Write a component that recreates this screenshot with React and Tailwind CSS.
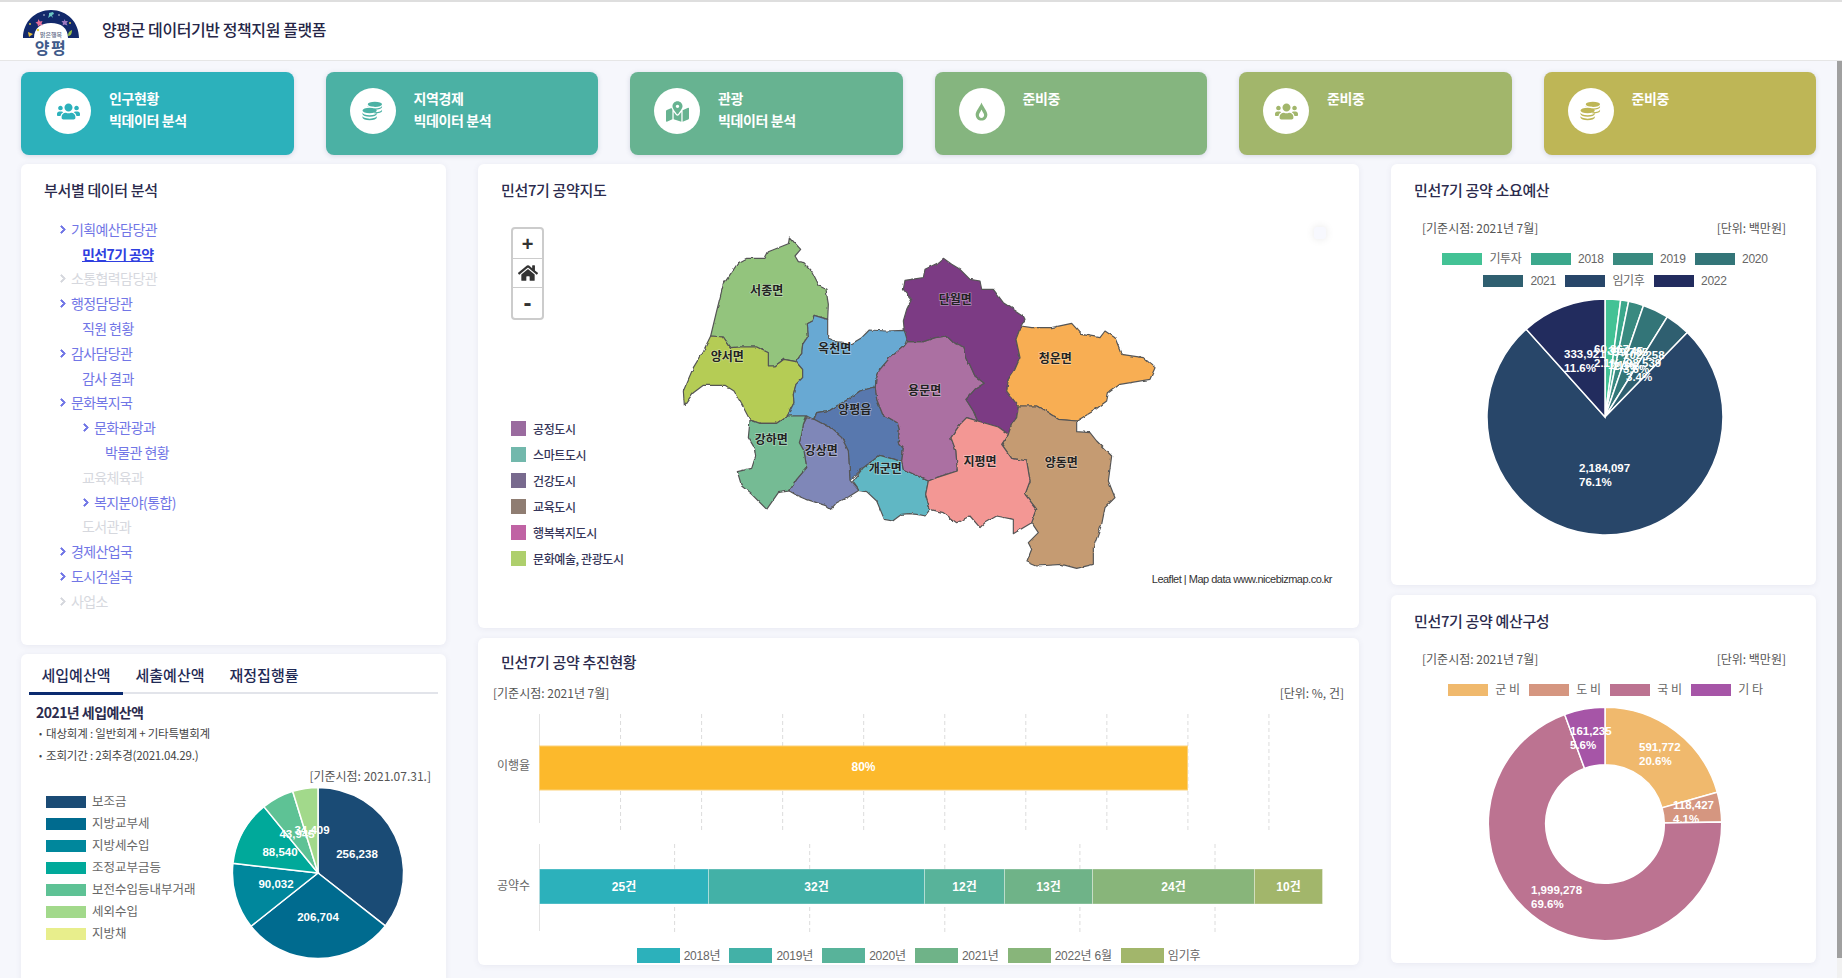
import { FaUsers, FaMapMarkedAlt, FaHome, FaChevronRight } from 'react-icons/fa';

const KR = { fontFamily: '"Noto Sans CJK KR", "Noto Sans", sans-serif' };
const CHART_FONT = '"Liberation Sans", "Noto Sans CJK KR", sans-serif';

const topCards = [
  { color: 'bg-[#2cb1bb]', text: 'text-[#2cb1bb]', icon: 'users', lines: ['인구현황', '빅데이터 분석'] },
  { color: 'bg-[#4bb1a4]', text: 'text-[#4bb1a4]', icon: 'coins', lines: ['지역경제', '빅데이터 분석'] },
  { color: 'bg-[#67b391]', text: 'text-[#67b391]', icon: 'map', lines: ['관광', '빅데이터 분석'] },
  { color: 'bg-[#85b57f]', text: 'text-[#85b57f]', icon: 'drop', lines: ['준비중'] },
  { color: 'bg-[#a2b66b]', text: 'text-[#a2b66b]', icon: 'users', lines: ['준비중'] },
  { color: 'bg-[#beb656]', text: 'text-[#beb656]', icon: 'coins', lines: ['준비중'] },
];

const tree = [
  { label: '기획예산담당관', level: 0, arrow: true },
  { label: '민선7기 공약', level: 1, active: true },
  { label: '소통협력담당관', level: 0, arrow: true, off: true },
  { label: '행정담당관', level: 0, arrow: true },
  { label: '직원 현황', level: 1 },
  { label: '감사담당관', level: 0, arrow: true },
  { label: '감사 결과', level: 1 },
  { label: '문화복지국', level: 0, arrow: true },
  { label: '문화관광과', level: 1, arrow: true },
  { label: '박물관 현황', level: 2 },
  { label: '교육체육과', level: 1, off: true },
  { label: '복지분야(통합)', level: 1, arrow: true },
  { label: '도서관과', level: 1, off: true },
  { label: '경제산업국', level: 0, arrow: true },
  { label: '도시건설국', level: 0, arrow: true },
  { label: '사업소', level: 0, arrow: true, off: true },
];

const regions = [
  { name: '서종면', fill: '#93c47d', x: 320, y: 210, pts: '388,48 422,85 405,105 415,122 432,125 455,150 478,195 498,205 505,250 503,295 462,283 458,300 442,308 445,345 428,370 425,398 408,422 372,415 345,435 325,435 325,395 290,378 240,378 212,380 190,348 152,345 170,270 190,190 235,125 260,112 315,112 325,92 385,68' },
  { name: '양서면', fill: '#b5cc55', x: 202, y: 408, pts: '152,345 190,348 212,380 240,378 290,378 325,395 325,435 345,435 372,415 408,422 428,445 428,470 408,490 400,520 402,545 382,585 350,607 300,607 270,597 245,550 222,510 195,493 130,493 100,515 73,553 70,510 100,440 130,390' },
  { name: '옥천면', fill: '#67a9d3', x: 524, y: 383, pts: '462,283 503,295 503,350 530,362 575,368 605,350 628,327 680,330 733,328 743,350 733,375 690,410 660,445 648,475 646,498 600,510 565,535 535,552 510,568 470,575 460,595 440,585 382,585 402,545 400,520 408,490 428,470 428,445 408,422 425,398 428,370 445,345 442,308 458,300' },
  { name: '양평읍', fill: '#5878ae', x: 584, y: 566, pts: '646,498 650,535 668,580 712,605 718,625 715,665 730,682 725,722 660,703 610,740 570,778 565,690 545,650 510,620 462,595 470,575 510,568 535,552 565,535 600,510' },
  { name: '강상면', fill: '#7f87b8', x: 484, y: 690, pts: '440,590 462,595 510,620 545,650 565,690 570,778 597,808 565,828 530,845 512,865 495,853 440,835 405,820 388,810 410,775 440,740 432,690 418,665 425,640 430,610' },
  { name: '강하면', fill: '#74bb94', x: 334, y: 658, pts: '270,597 300,607 350,607 382,585 440,585 430,610 425,640 418,665 432,690 440,740 410,775 388,810 355,815 320,865 275,820 245,795 232,752 275,742 287,705 283,680 265,650' },
  { name: '개군면', fill: '#60b7c4', x: 676, y: 745, pts: '660,703 725,722 730,745 805,780 797,820 810,865 795,885 770,880 745,878 725,880 698,900 673,895 650,840 620,812 597,808 578,782 610,740' },
  { name: '용문면', fill: '#ab6fa2', x: 794, y: 510, pts: '743,362 790,362 825,350 860,345 880,365 912,378 920,410 945,465 973,487 945,505 918,535 940,570 953,600 920,590 900,610 873,650 888,690 892,750 860,760 830,770 805,780 730,745 725,722 730,682 715,665 718,625 712,605 668,580 650,535 646,498 648,475 660,445 690,410 733,375' },
  { name: '단월면', fill: '#7b3b84', x: 886, y: 237, pts: '850,112 875,130 900,145 930,175 960,180 965,205 1000,205 1030,245 1090,285 1095,295 1083,315 1068,355 1080,410 1065,445 1045,475 1040,510 1075,555 1070,590 1055,610 1045,640 1015,618 953,600 940,570 918,535 945,505 973,487 945,465 920,410 912,378 880,365 860,345 825,350 790,362 743,362 733,328 730,300 740,265 755,235 730,205 735,178 790,170 795,145 835,125' },
  { name: '청운면', fill: '#f8ae53', x: 1186, y: 414, pts: '1083,315 1115,320 1175,320 1235,307 1265,340 1320,350 1335,330 1365,350 1385,400 1450,410 1485,440 1470,475 1380,490 1345,515 1340,540 1300,570 1250,600 1195,595 1165,575 1130,555 1075,555 1040,510 1045,475 1065,445 1080,410 1068,355' },
  { name: '양동면', fill: '#c59b72', x: 1204, y: 727, pts: '1130,555 1165,575 1195,595 1250,600 1250,632 1290,635 1310,660 1355,705 1345,780 1365,830 1335,860 1325,910 1300,980 1300,1030 1250,1042 1205,1030 1130,1035 1100,1022 1115,985 1105,965 1135,935 1115,905 1130,865 1095,820 1110,780 1100,720 1055,712 1025,670 1045,640 1055,610 1070,590 1075,555' },
  { name: '지평면', fill: '#f39794', x: 960, y: 723, pts: '920,590 953,600 1015,618 1045,640 1025,670 1055,712 1100,720 1110,780 1095,820 1130,865 1115,905 1060,938 1060,895 1010,885 975,905 960,920 930,885 890,905 850,875 810,865 797,820 805,780 830,770 860,760 892,750 888,690 873,650 900,610' },
];

const mapLegend = [
  ['공정도시', 'bg-[#9a6b9f]'],
  ['스마트도시', 'bg-[#72b8ac]'],
  ['건강도시', 'bg-[#786a8e]'],
  ['교육도시', 'bg-[#8f7d72]'],
  ['행복복지도시', 'bg-[#c063a4]'],
  ['문화예술, 관광도시', 'bg-[#aecf6c]'],
];

const revenue = [
  { label: '보조금', value: 256238, color: '#1a4b75', swatch: 'bg-[#1a4b75]', text: '256,238', x: 357, y: 856 },
  { label: '지방교부세', value: 206704, color: '#006b8f', swatch: 'bg-[#006b8f]', text: '206,704', x: 318, y: 919 },
  { label: '지방세수입', value: 90032, color: '#00879c', swatch: 'bg-[#00879c]', text: '90,032', x: 276, y: 886 },
  { label: '조정교부금등', value: 88540, color: '#00a99a', swatch: 'bg-[#00a99a]', text: '88,540', x: 280, y: 854 },
  { label: '보전수입등내부거래', value: 43945, color: '#5ec295', swatch: 'bg-[#5ec295]', text: '43,945', x: 297, y: 836 },
  { label: '세외수입', value: 34409, color: '#a2d98b', swatch: 'bg-[#a2d98b]', text: '34,409', x: 312, y: 832 },
  { label: '지방채', value: 0, color: '#e8ee8c', swatch: 'bg-[#e8ee8c]' },
];

const budget = [
  { label: '기투자', value: 60867, color: '#43c295', swatch: 'bg-[#43c295]', text: ['60,867', '2.1%'], x: 1593, y: 348 },
  { label: '2018', value: 31245, color: '#3ba88c', swatch: 'bg-[#3ba88c]', text: ['31,245', '1.1%'], x: 1607, y: 350 },
  { label: '2019', value: 59785, color: '#398a80', swatch: 'bg-[#398a80]', text: ['59,785', '2.1%'], x: 1612, y: 351 },
  { label: '2020', value: 102258, color: '#337578', swatch: 'bg-[#337578]', text: ['102,258', '3.6%'], x: 1622, y: 354 },
  { label: '2021', value: 98539, color: '#2f5f70', swatch: 'bg-[#2f5f70]', text: ['98,539', '3.4%'], x: 1625, y: 362 },
  { label: '임기후', value: 2184097, color: '#284669', swatch: 'bg-[#284669]', text: ['2,184,097', '76.1%'], x: 1578, y: 467 },
  { label: '2022', value: 333921, color: '#222c5e', swatch: 'bg-[#222c5e]', text: ['333,921', '11.6%'], x: 1563, y: 353 },
];

const composition = [
  { label: '군 비', value: 591772, color: '#f0b96d', swatch: 'bg-[#f0b96d]', text: ['591,772', '20.6%'], x: 1638, y: 746 },
  { label: '도 비', value: 118427, color: '#d59680', swatch: 'bg-[#d59680]', text: ['118,427', '4.1%'], x: 1672, y: 804 },
  { label: '국 비', value: 1999278, color: '#bc7391', swatch: 'bg-[#bc7391]', text: ['1,999,278', '69.6%'], x: 1530, y: 889 },
  { label: '기 타', value: 161235, color: '#a655a7', swatch: 'bg-[#a655a7]', text: ['161,235', '5.6%'], x: 1569, y: 730 },
];

const barLegend = [
  ['2018년', 'bg-[#2cb1bb]'],
  ['2019년', 'bg-[#43b1a7]'],
  ['2020년', 'bg-[#58b39a]'],
  ['2021년', 'bg-[#6fb388]'],
  ['2022년 6월', 'bg-[#88b57a]'],
  ['임기후', 'bg-[#a2b66b]'],
];

const pledgeBar = [
  { w: 169, color: '#2cb1bb', label: '25건' },
  { w: 216, color: '#43b1a7', label: '32건' },
  { w: 80, color: '#58b39a', label: '12건' },
  { w: 88, color: '#6fb388', label: '13건' },
  { w: 162, color: '#88b57a', label: '24건' },
  { w: 68, color: '#a2b66b', label: '10건' },
];

// builds wedge paths for a pie or donut, clockwise from 12 o'clock
function slices(items, cx, cy, r, inner = 0) {
  const total = items.reduce((s, i) => s + i.value, 0);
  let a = -Math.PI / 2;
  return items.filter((i) => i.value > 0).map((item) => {
    const b = a + (item.value / total) * Math.PI * 2;
    const large = b - a > Math.PI ? 1 : 0;
    const p = (rad, ang) => `${(cx + rad * Math.cos(ang)).toFixed(2)} ${(cy + rad * Math.sin(ang)).toFixed(2)}`;
    const d = inner
      ? `M${p(r, a)} A${r} ${r} 0 ${large} 1 ${p(r, b)} L${p(inner, b)} A${inner} ${inner} 0 ${large} 0 ${p(inner, a)} Z`
      : `M${cx} ${cy} L${p(r, a)} A${r} ${r} 0 ${large} 1 ${p(r, b)} Z`;
    a = b;
    return { d, color: item.color };
  });
}

function Panel({ className = '', children }) {
  return (
    <div className={`bg-white rounded-md shadow-[0_1px_6px_rgba(60,70,110,0.08)] overflow-hidden ${className}`}>
      {children}
    </div>
  );
}

function PanelTitle({ children }) {
  return (
    <div className="h-[52px] pl-[23px] flex items-center text-[15px] font-medium tracking-[-0.35px] text-[#2b2b4d]">
      {children}
    </div>
  );
}

function DropIcon() {
  return (
    <svg viewBox="0 0 20 28" className="w-[13px] h-[19px]">
      <path fill="currentColor" d="M10 0C8 6 1 13 1 18.5 1 24 5 28 10 28s9-4 9-9.5C19 13 12 6 10 0Z" />
      <path fill="#fff" d="M10 11c-1 3-4 6-4 8.500 0 2.500 1.800 4.500 4 4.500s4-2 4-4.500C14 17 11 14 10 11Z" />
    </svg>
  );
}

// two stacks of coins, the small one behind on the upper right
function CoinsIcon() {
  const band = (cx, y, rx, ry, h) => `M${cx - rx} ${y}A${rx} ${ry} 0 0 0 ${cx + rx} ${y}V${y + h}A${rx} ${ry} 0 0 1 ${cx - rx} ${y + h}Z`;
  return (
    <svg viewBox="0 0 22 22" className="w-[21px] h-[21px]" fill="currentColor">
      <ellipse cx="13.500" cy="3.500" rx="7.500" ry="2.800" />
      <path d={band(13.5, 5, 7.5, 2.8, 1.4)} />
      <path d={band(13.5, 9, 7.500, 2.800, 1.4)} />
      <rect x="0" y="6" width="13" height="16" fill="#fff" />
      <ellipse cx="8" cy="10" rx="7.500" ry="2.900" />
      <path d={band(8, 12, 7.5, 2.9, 1.6)} />
      <path d={band(8, 15.6, 7.5, 2.9, 1.6)} />
    </svg>
  );
}

function CardIcon({ type, text }) {
  return (
    <div className={`w-[46px] h-[46px] rounded-full bg-white flex items-center justify-center shrink-0 ${text}`}>
      {type === 'users' && <FaUsers className="text-[23px]" />}
      {type === 'coins' && <CoinsIcon />}
      {type === 'map' && <FaMapMarkedAlt className="text-[23px]" />}
      {type === 'drop' && <DropIcon />}
    </div>
  );
}

function Logo() {
  return (
    <div className="w-[56px] ml-[23px] flex flex-col items-center relative h-[48px] mt-[1px]">
      <svg viewBox="0 0 56 28" className="w-[56px] h-[28px] absolute top-0 left-0">
        <path fill="#12296b" d="M0 28C0 12 12 0 28 0s28 12 28 28H45C45 18 38 13 28 13S11 18 11 28Z" />
        <circle cx="15" cy="20" r="1.2" fill="#e8d23c" />
        <path fill="#e26d9a" d="M15 9l2 2.500 2.500-.5-1 2.500 1 2-2.500-.5-2 1.500-.5-2.500-2-1.500 2.500-1Z" />
        <path fill="#6cc7c4" d="M26 3l4-1 1 2-2 1 1 3-2-2-3 2 1-3Z" />
        <path fill="#9a78c0" d="M41 9l1.500 2 2.500 0-1.500 2 1 2.500-3-1-2 1 .5-2.500-1.500-2 2.500 0Z" />
        <path fill="#9bc24a" d="M49 20c-3 1-4 3-4 6 3 0 4-3 4-6Z" />
        <path fill="#eac23c" d="M5 22l5 2-4 3Z" />
        <circle cx="7" cy="14" r="0.9" fill="#e8d23c" />
        <circle cx="36" cy="5" r="0.7" fill="#fff" />
        <circle cx="47" cy="13" r="0.9" fill="#e8d23c" />
        <circle cx="21" cy="5" r="0.7" fill="#fff" />
      </svg>
      <span className="mt-[21px] text-[6px] leading-[8px] text-[#5d6a86] font-medium whitespace-nowrap">맑은행복</span>
      <span className="text-[16px] leading-[17px] font-bold tracking-[1.5px] text-[#3f5a8a] whitespace-nowrap">양평</span>
    </div>
  );
}

function TreeRow({ item }) {
  const pad = ['pl-[38px]', 'pl-[61px]', 'pl-[84px]'][item.level];
  const color = item.off ? 'text-[#d6d8de]' : item.active ? 'text-[#2f3fe0]' : 'text-[#7176e6]';
  const indent = item.arrow ? '' : item.level === 0 ? 'pl-[12px]' : '';
  return (
    <div className={`h-[24.8px] flex items-center ${pad} ${indent} ${color}`}>
      {item.arrow && <FaChevronRight className="text-[9px] w-[8px] mr-[4px] shrink-0 stroke-current stroke-[50]" />}
      <span className={`text-[14px] tracking-[-0.6px] ${item.active ? 'font-bold underline' : ''}`}>{item.label}</span>
    </div>
  );
}

function ChartLegend({ items, className = '' }) {
  return (
    <div className={`flex flex-wrap justify-center gap-x-[9.5px] gap-y-[10px] ${className}`}>
      {items.map((i) => (
        <div key={i.label} className="flex items-center h-[12px]">
          <span className={`w-[40px] h-[12px] mr-[7px] ${i.swatch}`} />
          <span className="text-[12px] text-[#666] tracking-[-0.3px]" style={{ fontFamily: CHART_FONT }}>{i.label}</span>
        </div>
      ))}
    </div>
  );
}

function BasisRow({ left, right, className = '' }) {
  return (
    <div className={`flex justify-between text-[12px] text-[#555] ${className}`}>
      <span>{left}</span>
      <span>{right}</span>
    </div>
  );
}

function TwoLineLabel({ item, ox, oy }) {
  return (
    <text fill="#fff" fontSize="11.5" fontWeight="700" fontFamily={CHART_FONT}>
      <tspan x={item.x - ox} y={item.y - oy + 5}>{item.text[0]}</tspan>
      <tspan x={item.x - ox} y={item.y - oy + 19}>{item.text[1]}</tspan>
    </text>
  );
}

function MapPanel() {
  return (
    <Panel className="h-[464px]">
      <PanelTitle>민선7기 공약지도</PanelTitle>
      <div className="relative h-[412px]">
        <div className="absolute left-[33px] top-[11px] w-[33px] border-2 border-[#ccc] rounded bg-white text-[#333]">
          <div className="h-[30px] flex items-center justify-center text-[20px] font-bold leading-none border-b border-[#ccc]" style={{ fontFamily: '"Liberation Sans", sans-serif' }}>+</div>
          <div className="h-[29px] flex items-center justify-center border-b border-[#ccc]">
            <FaHome className="text-[20px]" />
          </div>
          <div className="h-[30px] flex items-center justify-center text-[24px] font-bold leading-none" style={{ fontFamily: '"Liberation Sans", sans-serif' }}>-</div>
        </div>

        <div className="absolute left-[33px] top-[205px] flex flex-col gap-[11px]">
          {mapLegend.map(([label, swatch]) => (
            <div key={label} className="flex items-center h-[15px]">
              <span className={`w-[15px] h-[15px] mr-[7px] ${swatch}`} />
              <span className="text-[12px] font-medium tracking-[-0.4px] text-[#36365a]">{label}</span>
            </div>
          ))}
        </div>

        <svg viewBox="0 0 1560 1110" className="absolute left-[182px] top-[5px] w-[520px] h-[370px]">
          <defs>
            {/* roughens the borders; same map for all, so shared edges stay shared */}
            <filter id="rough" filterUnits="userSpaceOnUse" x="0" y="0" width="1560" height="1110">
              <feTurbulence type="fractalNoise" baseFrequency="0.045" numOctaves="2" seed="4" />
              <feDisplacementMap in="SourceGraphic" scale="9" xChannelSelector="R" yChannelSelector="G" />
            </filter>
          </defs>
          <g filter="url(#rough)">
            {regions.map((r) => (
              <polygon key={r.name} points={r.pts} fill={r.fill} stroke="#555" strokeWidth="3.500" strokeLinejoin="round" />
            ))}
          </g>
          {regions.map((r) => (
            <text
              key={r.name}
              x={r.x}
              y={r.y + 12}
              textAnchor="middle"
              fontSize="36"
              fontWeight="700"
              fill="#222"
              stroke="#ffffff66"
              strokeWidth="4"
              paintOrder="stroke"
              fontFamily='"Noto Sans CJK KR", sans-serif'
            >
              {r.name}
            </text>
          ))}
        </svg>

        <div className="absolute right-[27px] top-[355px] text-[11px] tracking-[-0.5px] text-[#333]" style={{ fontFamily: '"Liberation Sans", "Noto Sans CJK KR", sans-serif' }}>
          Leaflet | Map data www.nicebizmap.co.kr
        </div>
        <div className="absolute left-[836px] top-[11px] w-[12px] h-[12px] rounded-[3px] bg-[#f7f8fe] shadow-[0_0_8px_rgba(0,0,0,0.1)]" />
      </div>
    </Panel>
  );
}

function BarChartPanel() {
  const x0 = 45;
  const top = [1, 2, 3, 4, 5, 6, 7, 8, 9].map((n) => x0 + n * 81.05);
  const bottom = [1, 2, 3, 4, 5].map((n) => x0 + n * 135.1);
  let cursor = x0;
  return (
    <Panel className="h-[327px] relative">
      <div className="h-[48px] pl-[23px] flex items-center text-[15px] font-medium tracking-[-0.35px] text-[#2b2b4d]">민선7기 공약 추진현황</div>
      <BasisRow left="[기준시점: 2021년 7월]" right="[단위: %, 건]" className="pl-[15px] pr-[15px] h-[14px] items-center" />
      <svg viewBox="0 0 881 234" className="w-[881px] h-[234px] block -mt-[2px]" fontFamily={CHART_FONT}>
        {/* y here = page y - 698 */}
        <line x1={x0 + 16.5} x2={x0 + 16.5} y1="16" y2="125" stroke="#e3e3e3" />
        {top.map((x) => (
          <line key={x} x1={x + 16.5} x2={x + 16.5} y1="16" y2="134" stroke="#dcdcdc" strokeDasharray="4 3" />
        ))}
        <rect x={x0 + 16.5} y="48" width="648" height="44" fill="#fcb92c" stroke="#fbd27a" />
        <text x={x0 + 16.5 + 324} y="73" textAnchor="middle" fill="#fff" fontSize="12" fontWeight="700">80%</text>
        <text x="52" y="72" textAnchor="end" fill="#666" fontSize="12">이행율</text>

        <line x1={x0 + 16.5} x2={x0 + 16.5} y1="146" y2="233" stroke="#e3e3e3" />
        {bottom.map((x) => (
          <line key={x} x1={x + 16.5} x2={x + 16.5} y1="146" y2="234" stroke="#dcdcdc" strokeDasharray="4 3" />
        ))}
        {pledgeBar.map((s) => {
          const x = cursor + 16.5;
          cursor += s.w;
          return (
            <g key={s.label}>
              <rect x={x} y="171" width={s.w} height="35" fill={s.color} stroke="#ffffff55" />
              <text x={x + s.w / 2} y="193" textAnchor="middle" fill="#fff" fontSize="12" fontWeight="700">{s.label}</text>
            </g>
          );
        })}
        <text x="52" y="192" textAnchor="end" fill="#666" fontSize="12">공약수</text>
      </svg>
      <div className="flex justify-center gap-x-[9px] mt-[16px]">
        {barLegend.map(([label, swatch]) => (
          <div key={label} className="flex items-center h-[15px]">
            <span className={`w-[43px] h-[15px] mr-[4px] ${swatch}`} />
            <span className="text-[12px] text-[#666] tracking-[-0.2px]" style={{ fontFamily: CHART_FONT }}>{label}</span>
          </div>
        ))}
      </div>
    </Panel>
  );
}

export default function App() {
  return (
    <div className="h-screen w-full overflow-hidden flex flex-col bg-[#f6f7fc] text-[#333]" style={KR}>
      <header className="h-[61px] shrink-0 bg-white border-t-2 border-b border-t-[#dedede] border-b-[#e6e6e6] flex items-start">
        <div className="pt-[7px]"><Logo /></div>
        <div className="ml-[23px] h-[56px] flex items-center text-[16px] font-medium tracking-[-0.42px] text-[#262647] pb-[2px]">
          양평군 데이터기반 정책지원 플랫폼
        </div>
      </header>

      <div className="flex-1 min-h-0 flex">
        <main className="flex-1 min-w-0 overflow-hidden pl-[21px] pr-[21px] pt-[11px]">
          <div className="flex gap-8 h-[83px]">
            {topCards.map((c, idx) => (
              <div key={idx} className={`flex-1 rounded-lg shadow-[0_1px_5px_rgba(60,70,110,0.18)] pl-[24px] pt-[16px] flex gap-[18px] ${c.color}`}>
                <CardIcon type={c.icon} text={c.text} />
                <div className="text-[14px] font-semibold text-white leading-[22px] tracking-[-0.4px] -mt-[1px]">
                  {c.lines.map((l) => <div key={l}>{l}</div>)}
                </div>
              </div>
            ))}
          </div>

          <div className="flex gap-8 mt-[9px] items-start">
            <div className="w-[425px] shrink-0 flex flex-col gap-[9px]">
              <Panel className="h-[481px]">
                <PanelTitle>부서별 데이터 분석</PanelTitle>
                <div className="pt-[1px]">
                  {tree.map((item) => <TreeRow key={item.label} item={item} />)}
                </div>
              </Panel>

              <Panel className="h-[330px] relative">
                <div className="mx-[8px] mt-[2px] flex border-b-2 border-[#e2e4ea] h-[38px]">
                  <div className="w-[94px] border-b-[3px] border-[#0b2a6f] h-[39px] text-center text-[15px] font-medium text-[#1f2a55] pt-[8px]">세입예산액</div>
                  <div className="w-[94px] text-center text-[15px] font-medium text-[#1f2a55] pt-[8px]">세출예산액</div>
                  <div className="w-[94px] text-center text-[15px] font-medium text-[#1f2a55] pt-[8px]">재정집행률</div>
                </div>
                <div className="pl-[15px] mt-[8px] text-[14px] font-semibold tracking-[-0.55px] text-[#2b2b4d] leading-[20px]">2021년 세입예산액</div>
                <ul className="pl-[18px] mt-[1px] text-[11.5px] tracking-[-0.2px] text-[#444]">
                  <li className="h-[22px] flex items-center"><span className="w-[7px] text-[9px]">•</span>대상회계 : 일반회계 + 기타특별회계</li>
                  <li className="h-[22px] flex items-center"><span className="w-[7px] text-[9px]">•</span>조회기간 : 2회추경(2021.04.29.)</li>
                </ul>
                <div className="pr-[15px] text-right text-[12px] leading-[14px] text-[#555] mt-[2px]">[기준시점: 2021.07.31.]</div>
                <div className="flex">
                  <div className="pl-[25px] pt-[13px] w-[240px] flex flex-col gap-[10px] shrink-0">
                    {revenue.map((r) => (
                      <div key={r.label} className="flex items-center h-[12px]">
                        <span className={`w-[40px] h-[12px] mr-[6px] ${r.swatch}`} />
                        <span className="text-[12.5px] text-[#666] -mt-[2px]">{r.label}</span>
                      </div>
                    ))}
                  </div>
                  <svg viewBox="0 0 180 180" className="w-[180px] h-[180px] -ml-[33px] shrink-0" fontFamily={CHART_FONT}>
                    {slices(revenue, 90, 90, 85.6).map((s, i) => (
                      <path key={i} d={s.d} fill={s.color} stroke="#fff" strokeWidth="1.500" />
                    ))}
                    {revenue.filter((r) => r.text).map((r) => (
                      <text key={r.text} x={r.x - 228} y={r.y - 785 + 4} textAnchor="middle" fill="#fff" fontSize="11.5" fontWeight="700">{r.text}</text>
                    ))}
                  </svg>
                </div>
              </Panel>
            </div>

            <div className="flex-1 min-w-0 flex flex-col gap-[10px]">
              <MapPanel />
              <BarChartPanel />
            </div>

            <div className="w-[425px] shrink-0 flex flex-col gap-[10px]">
              <Panel className="h-[421px]">
                <PanelTitle>민선7기 공약 소요예산</PanelTitle>
                <BasisRow left="[기준시점: 2021년 7월]" right="[단위: 백만원]" className="pl-[31px] pr-[30px] h-[20px] items-center mt-[2px]" />
                <ChartLegend items={budget} className="mt-[15px] pl-[42px] pr-[39px]" />
                <svg viewBox="0 0 240 240" className="w-[240px] h-[240px] mx-auto mt-[10px] translate-x-[1px]">
                  {slices(budget, 120, 120, 118).map((s, i) => (
                    <path key={i} d={s.d} fill={s.color} stroke="#fff" strokeWidth="1.500" />
                  ))}
                  {budget.map((b) => <TwoLineLabel key={b.label} item={b} ox={1484} oy={297} />)}
                </svg>
              </Panel>

              <Panel className="h-[368px]">
                <PanelTitle>민선7기 공약 예산구성</PanelTitle>
                <BasisRow left="[기준시점: 2021년 7월]" right="[단위: 백만원]" className="pl-[31px] pr-[30px] h-[20px] items-center mt-[2px]" />
                <ChartLegend items={composition} className="mt-[15px] pl-[24px] pr-[20px]" />
                <svg viewBox="0 0 240 240" className="w-[240px] h-[240px] mx-auto mt-[8px] translate-x-[1px]">
                  {slices(composition, 120, 120, 116.7, 59.3).map((s, i) => (
                    <path key={i} d={s.d} fill={s.color} stroke="#fff" strokeWidth="1.500" />
                  ))}
                  {composition.map((b) => <TwoLineLabel key={b.label} item={b} ox={1484} oy={704} />)}
                </svg>
              </Panel>
            </div>
          </div>
        </main>

        <div className="w-[5px] shrink-0 flex flex-col bg-[#f1f1f1]">
          <div className="h-[897px] bg-[#a0a0a0]" />
        </div>
      </div>
    </div>
  );
}
